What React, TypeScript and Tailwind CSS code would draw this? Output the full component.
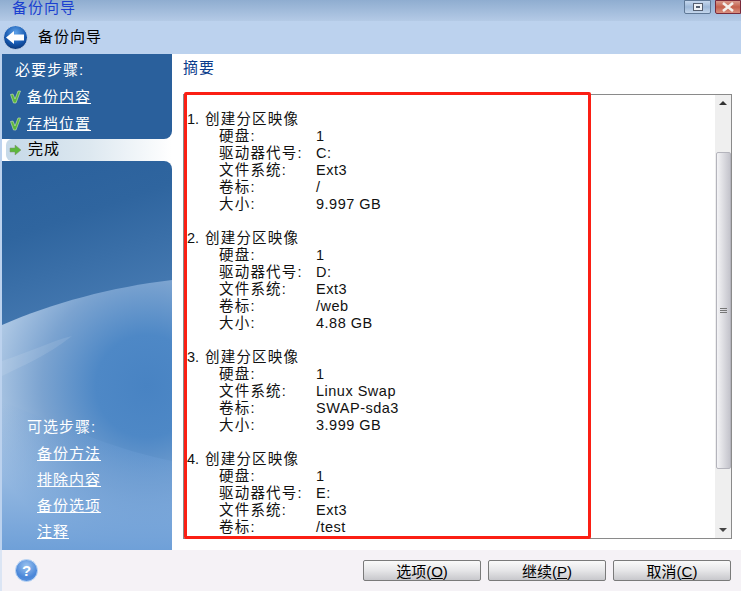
const cjk = "font-['Liberation_Sans','Noto_Sans_CJK_SC',sans-serif]";

type Row = [string, string];
const groups: { n: string; title: string; rows: Row[] }[] = [
  { n: "1.", title: "创建分区映像", rows: [["硬盘:", "1"], ["驱动器代号:", "C:"], ["文件系统:", "Ext3"], ["卷标:", "/"], ["大小:", "9.997 GB"]] },
  { n: "2.", title: "创建分区映像", rows: [["硬盘:", "1"], ["驱动器代号:", "D:"], ["文件系统:", "Ext3"], ["卷标:", "/web"], ["大小:", "4.88 GB"]] },
  { n: "3.", title: "创建分区映像", rows: [["硬盘:", "1"], ["文件系统:", "Linux Swap"], ["卷标:", "SWAP-sda3"], ["大小:", "3.999 GB"]] },
  { n: "4.", title: "创建分区映像", rows: [["硬盘:", "1"], ["驱动器代号:", "E:"], ["文件系统:", "Ext3"], ["卷标:", "/test"]] },
];

function Check() {
  return (
    <svg width="11" height="14" viewBox="0 0 11 14" className="shrink-0">
      <path d="M0.5 4.5 L3 4 L5 9 L8 1 L10.5 1 L6 13 L3.5 13 Z" fill="#5cb83c" stroke="#cfe8b8" strokeWidth="0.6" />
    </svg>
  );
}

function BackgroundWave() {
  return (
    <svg className="absolute inset-0 w-full h-full" viewBox="0 0 170 389" preserveAspectRatio="none">
      <defs>
        <linearGradient id="sky" x1="0" y1="0" x2="0.15" y2="1">
          <stop offset="0" stopColor="#2a609c" />
          <stop offset="0.2" stopColor="#2f659f" />
          <stop offset="0.45" stopColor="#4478b0" />
          <stop offset="1" stopColor="#4a82bc" />
        </linearGradient>
        <radialGradient id="hill" gradientUnits="userSpaceOnUse" cx="145" cy="225" r="170">
          <stop offset="0" stopColor="#4883c3" />
          <stop offset="0.3" stopColor="#4e88c6" />
          <stop offset="0.62" stopColor="#7ba3d0" />
          <stop offset="1" stopColor="#bcd2ea" />
        </radialGradient>
        <linearGradient id="fade" x1="0" y1="0" x2="0" y2="1">
          <stop offset="0" stopColor="#6fa0d8" stopOpacity="0" />
          <stop offset="1" stopColor="#6fa0d8" stopOpacity="1" />
        </linearGradient>
      </defs>
      <rect width="170" height="389" fill="url(#sky)" />
      <path d="M0 164 C50 142 110 126 170 119 L170 389 L0 389 Z" fill="url(#hill)" />
      <path d="M0 240 L0 389 L170 389 L170 300 C120 290 70 270 0 240 Z" fill="url(#fade)" />
      <path d="M0 200 C30 190 50 180 70 175 C45 195 20 205 0 215 Z" fill="#ffffff" opacity="0.1" />
    </svg>
  );
}

function Button({ label, k }: { label: string; k: string }) {
  return (
    <button className="w-[118px] h-[21px] rounded-[2px] border border-[#7a7a7a] bg-gradient-to-b from-[#fafafa] via-[#e6e6e8] to-[#c8c8cc] text-[15px] leading-[21px] pt-[1px] text-black flex items-center justify-center">
      {label}(<span className="underline">{k}</span>)
    </button>
  );
}

export default function App() {
  return (
    <div className={`w-[741px] h-[591px] overflow-hidden flex flex-col bg-white ${cjk}`}>
      {/* title bar */}
      <div className="h-[21px] shrink-0 flex items-start justify-between bg-gradient-to-b from-[#8fadd0] to-[#b4cae6]">
        <span className="pl-3 text-[15px] leading-[15px] tracking-[1px] text-[#1a3fd0]">备份向导</span>
        <div className="flex gap-1">
          <div className="w-[27px] h-[14px] rounded-b-[2px] border border-[#5f7896] bg-gradient-to-b from-[#c6d8ee] via-[#9db8d8] to-[#c4d6ec] flex items-center justify-center">
            <div className="w-[10px] h-[8px] bg-[#eef2f6] border border-[#555f70] flex items-center justify-center">
              <div className="w-[4px] h-[2px] bg-[#555f70]" />
            </div>
          </div>
          <div className="w-[26px] h-[14px] rounded-bl-[2px] border border-[#7a2a3a] bg-gradient-to-b from-[#d89a8c] via-[#c4604c] to-[#d89080] flex items-center justify-center">
            <svg width="14" height="10" viewBox="0 0 14 10">
              <path d="M2 1 L12 9 M12 1 L2 9" stroke="#f4f0ec" strokeWidth="2.6" />
            </svg>
          </div>
        </div>
      </div>

      {/* toolbar */}
      <div className="h-[33px] shrink-0 bg-[#bcd2ee] flex items-center pl-[3px] gap-[10px]">
        <svg width="25" height="25" viewBox="0 0 25 25">
          <defs>
            <radialGradient id="back" cx="0.5" cy="0.3" r="0.75">
              <stop offset="0" stopColor="#5fa2e8" />
              <stop offset="0.6" stopColor="#1658b0" />
              <stop offset="1" stopColor="#08306e" />
            </radialGradient>
          </defs>
          <circle cx="12.5" cy="12.5" r="12" fill="url(#back)" stroke="#dfe9f5" strokeWidth="0.8" />
          <path d="M3 12.5 L11 6 L11 9.5 L21 9.5 L21 15.5 L11 15.5 L11 19 Z" fill="#ffffff" />
        </svg>
        <span className="text-[15px] tracking-[1px] text-black">备份向导</span>
      </div>

      {/* body */}
      <div className="flex-1 flex min-h-0 pl-[2px] relative bg-white">
        <div className="absolute left-0 top-0 bottom-0 w-[2px] bg-[#bcd2ee]" />
        {/* sidebar */}
        <aside className="w-[170px] shrink-0 flex flex-col bg-white">
          <div className="h-[85px] bg-[#2a609c] rounded-br-[8px] pt-[6px]">
            <div className="pl-[13px] h-[20px] text-[15px] leading-[20px] tracking-[1px] text-white">必要步骤:</div>
            <div className="mt-[7px] pl-[8px] h-[20px] flex items-center gap-[6px] text-[15px] tracking-[1px] text-white">
              <Check />
              <span className="underline">备份内容</span>
            </div>
            <div className="mt-[7px] pl-[8px] h-[20px] flex items-center gap-[6px] text-[15px] tracking-[1px] text-white">
              <Check />
              <span className="underline">存档位置</span>
            </div>
          </div>
          <div className="h-[22px] ml-[4px] rounded-l-[6px] bg-gradient-to-r from-[#c6d9e8] via-[#dde8f0] to-white flex items-center pl-[3px] gap-[6px] text-[15px] leading-[18px] tracking-[1px] text-black">
            <svg width="13" height="12" viewBox="0 0 13 12">
              <path d="M1 4 L6 4 L6 1 L12 6 L6 11 L6 8 L1 8 Z" fill="#5cb83c" stroke="#7d8f70" strokeWidth="0.5" />
            </svg>
            <span className="mb-[3px]">完成</span>
          </div>
          <div className="flex-1 relative overflow-hidden rounded-tr-[8px]">
            <BackgroundWave />
            <div className="relative h-full flex flex-col justify-end pb-[8px] text-white text-[15px] tracking-[1px]">
              <div className="pl-[25px] h-[20px] leading-[20px] mb-[7px]">可选步骤:</div>
              <div className="pl-[35px] flex flex-col gap-[6px]">
                {["备份方法", "排除内容", "备份选项", "注释"].map((t) => (
                  <span key={t} className="h-[20px] leading-[20px] underline">{t}</span>
                ))}
              </div>
            </div>
          </div>
        </aside>

        {/* main */}
        <main className="flex-1 min-w-0 flex flex-col pl-[11px] pr-[9px] relative">
          <div className="h-[40px] shrink-0 pt-[3px] text-[15px] leading-[22px] tracking-[1px] text-[#0b3c8c]">摘要</div>
          <div className="h-[445px] border border-[#8a8a8a] flex overflow-hidden bg-white">
            <div className="flex-1 overflow-hidden pt-[16px] pl-[3px] text-[14.5px] leading-[17px] text-[#111]">
              {groups.map((g) => (
                <div key={g.n} className="mb-[17px]">
                  <div className="flex">
                    <span className="w-[18px]">{g.n}</span>
                    <span className="tracking-[1.2px]">{g.title}</span>
                  </div>
                  {g.rows.map(([a, b]) => (
                    <div key={a} className="flex pl-[32px]">
                      <span className="w-[97px] tracking-[1.2px]">{a}</span>
                      <span className="tracking-[0.5px]">{b}</span>
                    </div>
                  ))}
                </div>
              ))}
            </div>
            {/* scrollbar */}
            <div className="w-[16px] shrink-0 bg-[#efefef] flex flex-col items-center">
              <div className="h-[16px] flex items-center justify-center">
                <div className="w-0 h-0 border-x-[4px] border-x-transparent border-b-[4px] border-b-[#333]" />
              </div>
              <div className="mt-[41px] h-[317px] w-[15px] rounded-[2px] border border-[#b4b4bc] bg-gradient-to-r from-[#f4f4f6] to-[#c4c4cc] flex flex-col items-center justify-center gap-[1px]">
                <div className="w-[7px] h-[1px] bg-[#777]" />
                <div className="w-[7px] h-[1px] bg-[#777]" />
                <div className="w-[7px] h-[1px] bg-[#777]" />
              </div>
              <div className="flex-1" />
              <div className="h-[16px] flex items-center justify-center">
                <div className="w-0 h-0 border-x-[4px] border-x-transparent border-t-[4px] border-t-[#444]" />
              </div>
            </div>
          </div>
          {/* red annotation */}
          <div className="absolute left-[12px] top-[38px] w-[407px] h-[447px] border-[3px] border-[#fb1f14] rounded-[2px] pointer-events-none" />
        </main>
      </div>

      {/* footer */}
      <div className="h-[41px] shrink-0 bg-[#f5f2f6] flex items-center pl-[15px] pr-[10px] relative">
        <div className="absolute left-0 top-0 bottom-0 w-[2px] bg-[#dbe5f4]" />
        <svg width="23" height="23" viewBox="0 0 23 23">
          <defs>
            <radialGradient id="help" cx="0.5" cy="0.3" r="0.75">
              <stop offset="0" stopColor="#9cc4f0" />
              <stop offset="0.7" stopColor="#4a86d8" />
              <stop offset="1" stopColor="#5f97e0" />
            </radialGradient>
          </defs>
          <circle cx="11.5" cy="11.5" r="11" fill="url(#help)" stroke="#bcd6f4" />
          <text x="11.5" y="17" textAnchor="middle" fontSize="15" fontWeight="700" fill="#ffffff" fontFamily="Liberation Sans">?</text>
        </svg>
        <div className="ml-auto flex gap-[7px]">
          <Button label="选项" k="O" />
          <Button label="继续" k="P" />
          <Button label="取消" k="C" />
        </div>
      </div>
    </div>
  );
}
